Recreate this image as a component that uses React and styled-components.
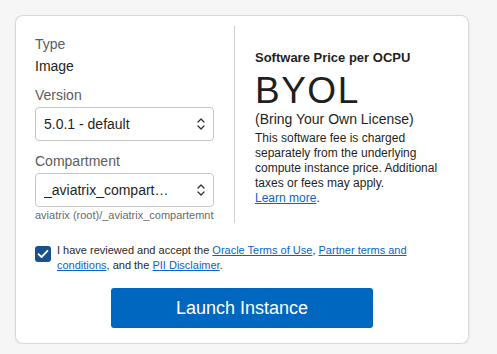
import React from "react";
import styled, { createGlobalStyle } from "styled-components";

const GlobalStyle = createGlobalStyle`
  body {
    margin: 0;
    background: #f6f6f6;
    font-family: "Liberation Sans", Arial, sans-serif;
    color: #222;
  }
`;

const Chevrons = () => (
  <svg width="8" height="14" viewBox="0 0 8 14" fill="none">
    <path d="M1 5 L4 2 L7 5" stroke="#333" strokeWidth="1.3" strokeLinecap="round" strokeLinejoin="round" />
    <path d="M1 9 L4 12 L7 9" stroke="#333" strokeWidth="1.3" strokeLinecap="round" strokeLinejoin="round" />
  </svg>
);

const App = () => {
  return (
    <Page>
      <GlobalStyle />
      <Card>
        <Top>
          <LeftColumn>
            <Label>Type</Label>
            <Value>Image</Value>
            <Label>Version</Label>
            <Select>
              <SelectText>5.0.1 - default</SelectText>
              <Chevrons />
            </Select>
            <Label $spaced>Compartment</Label>
            <Select>
              <SelectText>_aviatrix_compartemnt</SelectText>
              <Chevrons />
            </Select>
            <Helper>aviatrix (root)/_aviatrix_compartemnt</Helper>
          </LeftColumn>
          <RightColumn>
            <PriceTitle>Software Price per OCPU</PriceTitle>
            <BigPrice>BYOL</BigPrice>
            <Subtitle>(Bring Your Own License)</Subtitle>
            <Description>
              This software fee is charged separately from the underlying
              compute instance price. Additional taxes or fees may apply.
              <br />
              <Link href="#">Learn more</Link>.
            </Description>
          </RightColumn>
        </Top>
        <AgreeRow>
          <Checkbox>
            <svg width="12" height="10" viewBox="0 0 12 10" fill="none">
              <path d="M1.5 5.2 L4.5 8 L10.5 1.8" stroke="#fff" strokeWidth="1.8" strokeLinecap="round" strokeLinejoin="round" />
            </svg>
          </Checkbox>
          <AgreeText>
            I have reviewed and accept the <Link href="#">Oracle Terms of Use</Link>,{" "}
            <Link href="#">Partner terms and conditions</Link>, and the{" "}
            <Link href="#">PII Disclaimer</Link>.
          </AgreeText>
        </AgreeRow>
        <ButtonRow>
          <LaunchButton>Launch Instance</LaunchButton>
        </ButtonRow>
      </Card>
    </Page>
  );
};

const Page = styled.div`
  padding: 15px 0 0 15px;
`;

const Card = styled.div`
  width: 414px;
  padding: 10px 19px 15px;
  background: #fff;
  border: 1px solid #d9d9d9;
  border-radius: 8px;
  box-shadow: 0 1px 3px rgba(0, 0, 0, 0.08);
`;

const Top = styled.div`
  display: grid;
  grid-template-columns: 200px 1fr;
`;

const LeftColumn = styled.div`
  display: flex;
  flex-direction: column;
  padding: 9px 20px 1px 0;
  border-right: 1px solid #cfcfcf;
`;

const Label = styled.div`
  font-size: 14px;
  line-height: 18px;
  color: #5c5c5c;
  margin-top: ${(p) => (p.$spaced ? "11px" : "0")};
  margin-bottom: 3px;
`;

const Value = styled.div`
  font-size: 14px;
  line-height: 18px;
  color: #1f1f1f;
  margin: 1px 0 11px;
`;

const Select = styled.div`
  display: flex;
  align-items: center;
  justify-content: space-between;
  height: 34px;
  box-sizing: border-box;
  padding: 0 8px 0 8px;
  border: 1px solid #c6c6c6;
  border-radius: 4px;
  background: #fff;
`;

const SelectText = styled.span`
  font-size: 14px;
  color: #1f1f1f;
  white-space: nowrap;
  overflow: hidden;
  text-overflow: ellipsis;
  max-width: 130px;
`;

const Helper = styled.div`
  font-size: 11px;
  line-height: 14px;
  color: #6a6a6a;
  margin-top: 1px;
  white-space: nowrap;
`;

const RightColumn = styled.div`
  padding: 24px 0 0 20px;
`;

const PriceTitle = styled.div`
  font-size: 13px;
  font-weight: bold;
  line-height: 16px;
  color: #1f1f1f;
`;

const BigPrice = styled.div`
  font-size: 37px;
  letter-spacing: 1.5px;
  line-height: 38px;
  margin-top: 6px;
  color: #1f1f1f;
`;

const Subtitle = styled.div`
  font-size: 14px;
  line-height: 17px;
  margin-top: 1px;
  color: #1f1f1f;
`;

const Description = styled.p`
  margin: 3px 0 0;
  font-size: 12px;
  line-height: 15px;
  color: #1f1f1f;
`;

const Link = styled.a`
  color: #0a64c8;
  text-decoration: underline;
`;

const AgreeRow = styled.div`
  display: flex;
  align-items: flex-start;
  gap: 6px;
  margin-top: 20px;
`;

const Checkbox = styled.div`
  flex: none;
  width: 16px;
  height: 16px;
  margin-top: 3px;
  border-radius: 3px;
  background: #17528f;
  display: flex;
  align-items: center;
  justify-content: center;
`;

const AgreeText = styled.div`
  font-size: 11px;
  line-height: 15px;
  color: #2a2a2a;
`;

const ButtonRow = styled.div`
  display: flex;
  justify-content: center;
  margin-top: 15px;
`;

const LaunchButton = styled.button`
  width: 262px;
  height: 40px;
  border: none;
  border-radius: 3px;
  background: #0067c1;
  color: #fff;
  font-family: "Liberation Sans", Arial, sans-serif;
  font-size: 18px;
  cursor: pointer;
`;

export default App;
